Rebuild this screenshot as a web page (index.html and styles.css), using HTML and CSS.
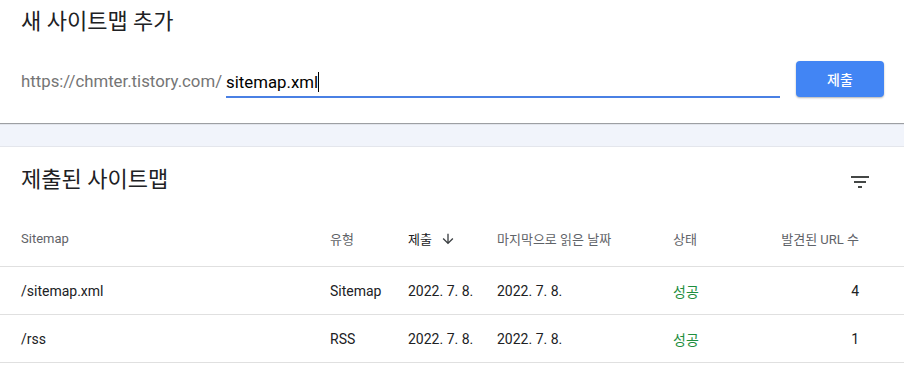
FILE: index.html
```html
<!DOCTYPE html>
<html lang="ko">
<head>
  <meta charset="UTF-8" />
  <title>Sitemaps</title>
  <link rel="stylesheet" href="styles.css">
</head>
<body>
  <!-- 새 사이트맵 추가 -->
  <div class="card add-card">
    <h2 class="card-title">새 사이트맵 추가</h2>
    <div class="add-row">
      <span class="prefix">https://chmter.tistory.com/</span>
      <div class="field"><span class="field-text">sitemap.xml</span><span class="caret"></span></div>
      <button class="submit-btn">제출</button>
    </div>
  </div>

  <div class="gap-band"></div>

  <!-- 제출된 사이트맵 -->
  <div class="card list-card">
    <div class="list-head">
      <h2 class="card-title">제출된 사이트맵</h2>
      <svg class="filter-icon" width="24" height="24" viewBox="0 0 24 24"><path d="M10 18h4v-2h-4v2zM3 6v2h18V6H3zm3 7h12v-2H6v2z" fill="#444746"/></svg>
    </div>

    <div class="grid-row header-row">
      <div>Sitemap</div>
      <div>유형</div>
      <div class="sorted">제출
        <svg width="16" height="16" viewBox="0 0 24 24"><path d="M20 12l-1.41-1.41L13 16.17V4h-2v12.17l-5.58-5.59L4 12l8 8 8-8z" fill="#3c4043"/></svg>
      </div>
      <div>마지막으로 읽은 날짜</div>
      <div>상태</div>
      <div class="num">발견된 URL 수</div>
    </div>

    <div class="grid-row data-row">
      <div>/sitemap.xml</div>
      <div>Sitemap</div>
      <div>2022. 7. 8.</div>
      <div>2022. 7. 8.</div>
      <div class="ok">성공</div>
      <div class="num">4</div>
    </div>
    <div class="grid-row data-row">
      <div>/rss</div>
      <div>RSS</div>
      <div>2022. 7. 8.</div>
      <div>2022. 7. 8.</div>
      <div class="ok">성공</div>
      <div class="num">1</div>
    </div>
  </div>
</body>
</html>
```

FILE: styles.css
```css
:root {
  --text: #202124;
  --muted: #5f6368;
  --blue: #4285f4;
  --line: #e0e0e0;
  --green: #1e8e3e;
}
* { box-sizing: border-box; }
body {
  margin: 0;
  font-family: Roboto, "Noto Sans CJK KR", sans-serif;
  color: var(--text);
  background: #fff;
}

/* ===== Cards ===== */
.card { background: #fff; }
.card-title { margin: 0; font-size: 22px; font-weight: 400; line-height: 28px; color: var(--text); }

.add-card { padding: 8px 20px 25px 21px; box-shadow: 0 1px 1px rgba(0,0,0,.35); position: relative; }
.add-row { display: flex; align-items: center; margin-top: 24px; }
.prefix { font-size: 16.8px; color: #757575; padding-top: 4px; margin-right: 4px; }
.field { flex: 1; height: 36px; display: flex; align-items: flex-end; padding-bottom: 4px; border-bottom: 2px solid #4a80e4; margin-top: 2px; }
.field-text { font-size: 16.8px; color: #000; }
.caret { display: inline-block; width: 1px; height: 20px; background: #000; margin-left: 0; }
.submit-btn {
  margin-left: 16px; width: 88px; height: 36px;
  background: var(--blue); color: #fff; border: none; border-radius: 4px;
  font-family: inherit; font-size: 14px; font-weight: 500;
  box-shadow: 0 1px 2px rgba(0,0,0,.3);
}

.gap-band { height: 23px; background: #f1f4fb; }

.list-card { border-top: 1px solid #e4e6ec; }
.list-head { display: flex; justify-content: space-between; align-items: center; padding: 17px 32px 0 21px; height: 48px; }
.filter-icon { display: block; margin-top: 4px; }

/* ===== Table ===== */
.grid-row {
  display: grid;
  grid-template-columns: 309px 78px 89px 176px 1fr 120px;
  align-items: center;
  padding: 0 45px 0 21px;
  border-bottom: 1px solid var(--line);
}
.header-row { height: 72px; padding-top: 16px; font-size: 13px; color: var(--muted); }
.header-row .sorted { color: var(--text); display: flex; align-items: center; gap: 8px; }
.data-row { height: 48px; font-size: 14px; }
.num { text-align: right; }
.ok { color: var(--green); }
```
